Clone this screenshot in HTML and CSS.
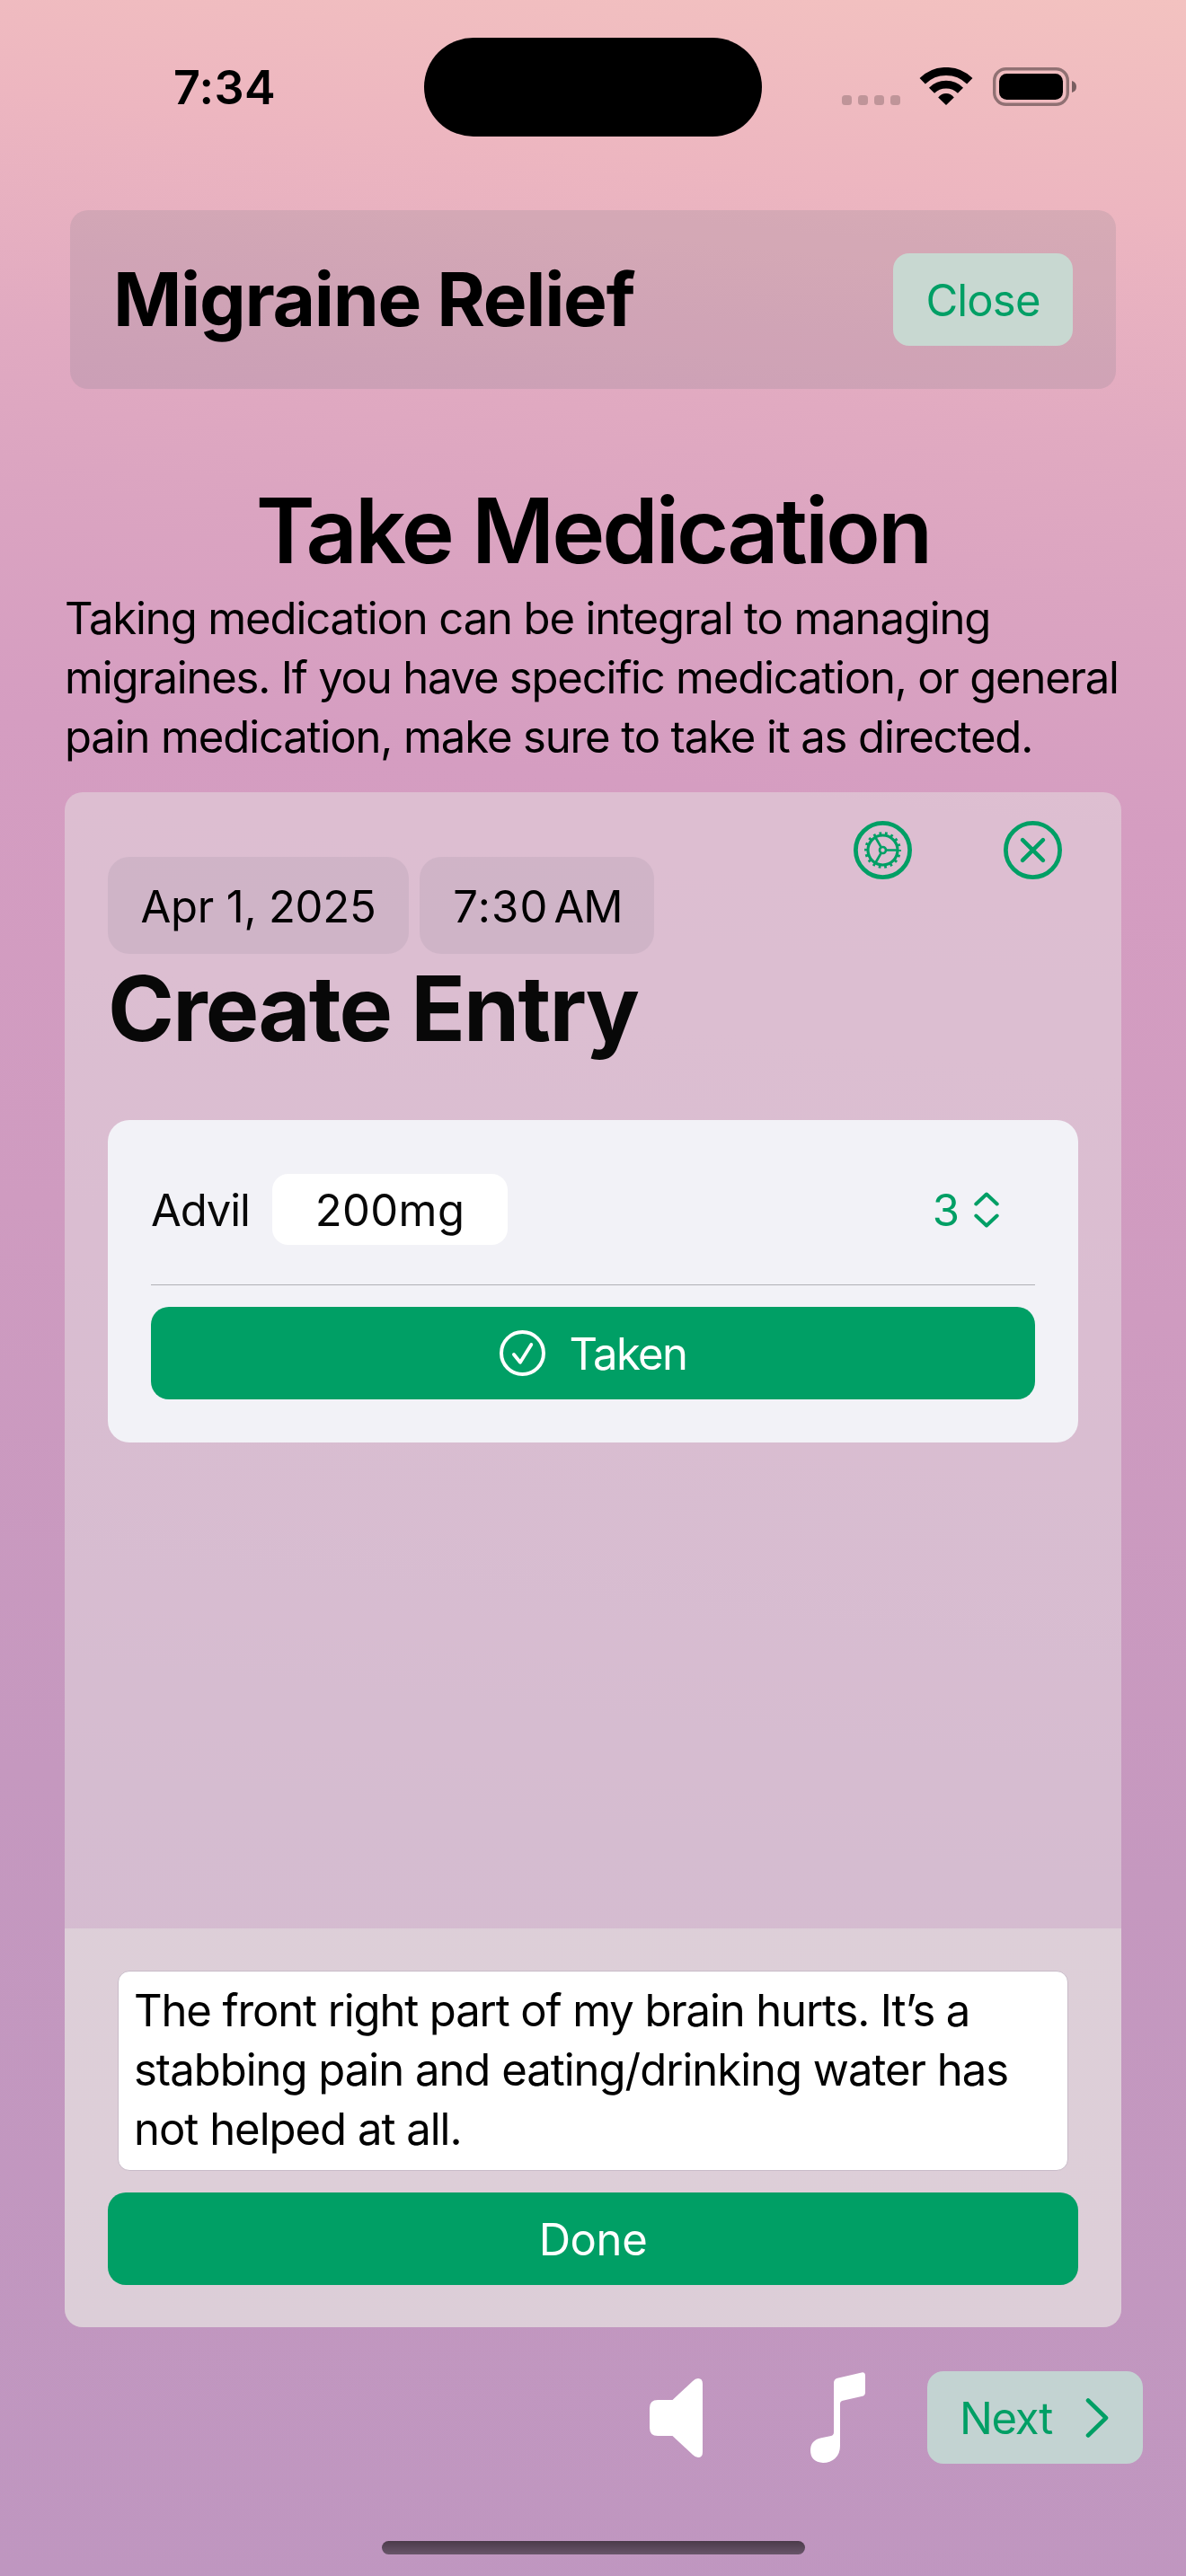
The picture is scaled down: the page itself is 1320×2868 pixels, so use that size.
FILE: index.html
```html
<!DOCTYPE html>
<html lang="en">
<head>
<meta charset="utf-8">
<title>Migraine Relief</title>
<link rel="stylesheet" href="styles.css">
</head>
<body>
<div class="screen">
  <div class="status">
    <span class="time">7:34</span>
    <div class="island"></div>
    <svg class="dots" width="66" height="44" viewBox="937 75 66 44">
      <rect x="937" y="106" width="11" height="11" rx="3.5"/><rect x="955" y="106" width="11" height="11" rx="3.5"/><rect x="973" y="106" width="11" height="11" rx="3.5"/><rect x="991" y="106" width="11" height="11" rx="3.5"/>
    </svg>
    <svg class="wifi" width="60" height="44" viewBox="-30 -42 60 44">
      <path d="M-26.3-26.8A37.5 37.5 0 0 1 26.3-26.8" fill="none" stroke="#000" stroke-width="9"/>
      <path d="M-16-16.3A22.8 22.8 0 0 1 16-16.3" fill="none" stroke="#000" stroke-width="8.6"/>
      <path d="M0 0L-8.8-8.6Q-5-13 0-13Q5-13 8.8-8.6Z"/>
    </svg>
    <svg class="battery" width="95" height="44" viewBox="1105 75 95 44">
      <rect x="1106.7" y="76.7" width="81.6" height="39.6" rx="13" fill="none" stroke="#000" stroke-opacity=".4" stroke-width="3.4"/>
      <rect x="1112" y="82" width="71" height="29" rx="8.5"/>
      <path d="M1193 90Q1198 91.500 1198 96.500T1193 103Z" fill-opacity=".5"/>
    </svg>
  </div>

  <header class="header">
    <h1 class="app-title">Migraine Relief</h1>
    <button class="close">Close</button>
  </header>

  <h2 class="heading">Take Medication</h2>
  <p class="intro"><span class="l1">Taking medication can be integral to managing</span><br><span class="l2">migraines. If you have specific medication, or general</span><br><span class="l1">pain medication, make sure to take it as directed.</span></p>

  <main class="card">
    <div class="toolbar">
      <div class="pill date">Apr 1, 2025</div>
      <div class="pill clock"><span>7:30</span><span class="ampm">AM</span></div>
      <div class="tools">
        <svg width="65" height="65" viewBox="-32.500 -32.500 65 65" fill="none" stroke="#009f65">
          <circle r="30.100" stroke-width="4.800"/>
          <circle r="16.500" stroke-width="3.200"/>
          <circle r="18.700" stroke-width="3.400" stroke-dasharray="2.700 3.828" stroke-dashoffset="1.350"/>
          <circle r="3.500" stroke-width="2.600"/>
          <path d="M4 0H16M-2.200 3.800L-8 14M-2.200-3.800L-8-14" stroke-width="2.700"/>
        </svg>
        <svg width="65" height="65" viewBox="-32.500 -32.500 65 65" fill="none" stroke="#009f65">
          <circle r="30.100" stroke-width="4.800"/>
          <path d="M-11.400-11.400L11.400 11.400M11.400-11.400L-11.400 11.400" stroke-width="4.600" stroke-linecap="round"/>
        </svg>
      </div>
    </div>
    <h2 class="entry-title">Create Entry</h2>

    <section class="med">
      <div class="med-row">
        <span class="med-name">Advil</span>
        <span class="dose">200mg</span>
        <span class="count">3</span>
        <svg width="28" height="42" viewBox="-14 -21 28 42" fill="none" stroke="#009f65" stroke-width="4" stroke-linecap="round" stroke-linejoin="round">
          <path d="M-11.700-6.500L0-17.500L11.700-6.500M-11.700 6.500L0 17.500L11.700 6.500"/>
        </svg>
      </div>
      <button class="btn taken">
        <svg width="51" height="51" viewBox="-25.500 -25.500 51 51" fill="none" stroke="#fff">
          <circle r="23.500" stroke-width="4"/>
          <path d="M-9.600 1.500L-2.500 10.300L9.800-9.600" stroke-width="3.800" stroke-linecap="round" stroke-linejoin="round"/>
        </svg>
        <span class="label">Taken</span>
      </button>
    </section>

    <section class="notes">
      <div class="note-box"><span class="n1">The front right part of my brain hurts. It’s a</span><br><span class="n2">stabbing pain and eating/drinking water has</span><br><span class="n2">not helped at all.</span></div>
      <button class="btn done"><span class="label">Done</span></button>
    </section>
  </main>

  <footer class="footer">
    <svg class="speaker" width="59" height="88" viewBox="0 0 59 88" fill="#fff"><path d="M9 24H25.500L48 3Q51 0 54 0Q59 0 59 6V82Q59 88 54 88Q51 88 48 85L25.500 64H9Q0 64 0 55V33Q0 24 9 24Z"/></svg>
    <svg class="note" width="61" height="101" viewBox="0 0 61 101" fill="#fff"><path d="M26 12Q26 8 30 6.800L57 .4Q61-.2 61 4V22.500Q61 26 58 26.700L36 31.700Q33 32.300 33 35.500V82Q33 91 27.500 96Q22 101 14 101Q0 100 0 87Q0 76 12 73.300L23 71Q26 70 26 67Z"/></svg>
    <button class="next"><span class="label">Next</span>
      <svg width="26" height="46" viewBox="-3 -23 26 46" fill="none" stroke="#009f65" stroke-width="4.600" stroke-linecap="round" stroke-linejoin="round"><path d="M0-19.500L20 0L0 19.500"/></svg>
    </button>
  </footer>
  <div class="home"></div>
</div>
</body>
</html>
```
FILE: styles.css
```css
* { box-sizing: border-box; margin: 0; padding: 0; }

body {
  width: 1320px;
  font-family: Inter, "Liberation Sans", sans-serif;
  font-size: 49px;
  color: #000;
}

button { border: 0; font: inherit; color: inherit; }
svg { display: block; flex: none; }

.screen {
  display: flex;
  flex-direction: column;
  height: 2868px;
  padding-top: 42px;
  overflow: hidden;
  white-space: nowrap;
  background: linear-gradient(186deg, #f3c2c0 0%, #edb6c0 8%, #e1aac1 16.5%, #dba4c1 22.5%, #d59dc1 31%, #cf9bc0 49%, #c598bf 70%, #bf96c0 100%);
}

.status { display: flex; align-items: center; height: 110px; }
.time { width: 472px; padding-left: 193px; font-size: 52px; font-weight: 600; letter-spacing: .4px; }
.island { width: 376px; height: 110px; border-radius: 55px; background: #000; }
.dots { margin-left: 89px; fill: rgba(0, 0, 0, .2); }
.wifi { margin-left: 20px; }
.battery { margin-left: 22px; }

.header {
  display: flex;
  align-items: center;
  justify-content: space-between;
  height: 199px;
  margin: 82px 78px 0;
  padding: 0 48px;
  border-radius: 20px;
  background: rgba(116, 120, 134, .18);
}
.app-title { font-size: 82px; font-weight: 700; letter-spacing: -1.3px; }
.close {
  width: 200px;
  height: 103px;
  padding-top: 2px;
  border-radius: 18px;
  background: #c8d8d1;
  color: #009f65;
  letter-spacing: -.85px;
}

.heading {
  margin-top: 98px;
  line-height: 120px;
  text-align: center;
  font-size: 100px;
  font-weight: 600;
  letter-spacing: -3px;
}
.intro { margin: 5px 72px 0; line-height: 66px; }

.card {
  display: flex;
  flex-direction: column;
  height: 1709px;
  margin: 28px 72px 0;
  border-radius: 20px;
  overflow: hidden;
  background: rgba(229, 223, 225, .5);
}
.toolbar { display: flex; align-items: flex-end; gap: 12px; height: 180px; padding: 32px 66px 0 48px; }
.pill {
  display: flex;
  align-items: center;
  justify-content: center;
  height: 108px;
  padding-top: 2px;
  border-radius: 24px;
  background: rgba(118, 118, 128, .12);
}
.date { width: 335px; letter-spacing: -.2px; }
.clock { width: 261px; padding-left: 2px; gap: 6px; letter-spacing: 1.2px; }
.ampm { letter-spacing: -1px; }
.tools { display: flex; align-self: flex-start; gap: 102px; margin-left: auto; }

.entry-title {
  margin-left: 48px;
  line-height: 121px;
  font-size: 100px;
  font-weight: 700;
  letter-spacing: -1.8px;
  color: #080808;
}

.med {
  height: 359px;
  margin: 64px 48px 0;
  padding: 60px 48px 48px;
  border-radius: 24px;
  background: #f2f2f7;
}
.med-row { display: flex; align-items: center; height: 124px; padding: 0 40px 44px 0; border-bottom: 1px solid #b0b0b5; color: #080808; }
.med-name { width: 135px; padding-top: 2px; letter-spacing: -1.1px; }
.dose {
  width: 262px;
  height: 79px;
  line-height: 81px;
  border-radius: 18px;
  background: #fff;
  text-align: center;
  letter-spacing: .4px;
}
.count { margin: 0 16px 0 auto; padding-top: 2px; color: #009f65; }

.btn {
  display: flex;
  align-items: center;
  justify-content: center;
  width: 100%;
  height: 103px;
  border-radius: 20px;
  background: #009f65;
  color: #fff;
}
.label { padding-top: 2px; }
.taken { gap: 27px; margin-top: 24px; letter-spacing: -1.6px; }
.done { margin-top: 24px; letter-spacing: -.4px; }

.notes { height: 444px; margin-top: auto; padding: 47px 48px; background: rgba(230, 225, 224, .5); }
.note-box {
  height: 223px;
  margin: 0 11px;
  padding: 11px 17px 0;
  border: 1px solid #c8bbc8;
  border-radius: 13px;
  background: #fff;
  line-height: 66px;
}
.l1 { letter-spacing: -1.12px; }
.l2 { letter-spacing: -1.2px; }
.n1 { letter-spacing: -1.12px; }
.n2 { letter-spacing: -1px; }

.footer { display: flex; align-items: center; height: 103px; margin-top: 49px; padding: 0 48px 0 723px; }
.note { margin-left: 120px; }
.next {
  display: flex;
  align-items: center;
  justify-content: space-between;
  width: 240px;
  height: 103px;
  margin-left: auto;
  padding: 0 38px 0 36px;
  border-radius: 18px;
  background: #c3d3d2;
  color: #009f65;
  letter-spacing: -1.3px;
}
.home {
  width: 471px;
  height: 15px;
  margin: 86px 0 0 425px;
  border-radius: 8px;
  background: linear-gradient(#4b3b4a, #69556a);
}
```
